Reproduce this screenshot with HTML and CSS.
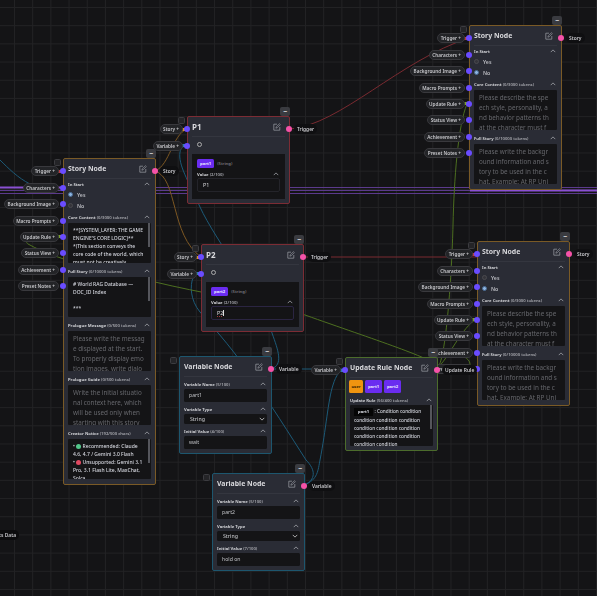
FILE: index.html
```html
<!DOCTYPE html>
<html>
<head>
    <title>Story Graph</title>
    <meta name="viewport" content="width=device-width, initial-scale=1">
    <link rel="stylesheet" href="styles.css">
</head>
<body>
<svg class="defs" width="0" height="0">
    <symbol id="chev" viewBox="0 0 8 5"><path d="M1 4 L4 1 L7 4" fill="none" stroke="currentColor" stroke-width="1"/></symbol>
    <symbol id="edit" viewBox="0 0 10 10"><path d="M5 1.5 H1 V9 H8.5 V5" fill="none" stroke="currentColor" stroke-width="0.8"/><path d="M3.6 6.5 L4 4.9 L8 0.9 L9.2 2 L5.2 6 Z" fill="none" stroke="currentColor" stroke-width="0.7"/></symbol>
</svg>

<div class="canvas">
    <svg class="wires" width="597" height="596" viewBox="0 0 597 596">
        <g fill="none" stroke="#5b3a8c" stroke-width="1">
            <path d="M0 187.5 H597"/>
            <path d="M0 190.5 H597"/>
            <path d="M0 193.5 H597"/>
        </g>
        <path class="wire-char" d="M0 187.5 H66"/>
        <path class="wire-char" d="M470 190.5 H597"/>
        <g class="wire-blue">
            <path d="M0 160 C8 168 18 178 30 184"/>
            <path d="M271 369 C284 365 278 350 272 333 C262 300 215 240 200 207 C188 180 178 165 180 152 C181 147 184 146 187 146"/>
            <path d="M304 485 C316 480 316 470 306 460 C290 435 270 403 250 375 C235 352 220 335 200 312 C190 300 190 285 193 278 C195 274 198 273 201 273"/>
            <path d="M271 369 H345"/>
            <path d="M304 485 C318 480 318 470 320 460 C326 430 328 400 333 385 C336 375 340 370 345 369"/>
        </g>
        <g class="wire-green">
            <path d="M437 368 C445 362 375 340 305 315 C250 300 200 293 155 282 C115 273 60 262 28 244 C20 238 50 237 63 237"/>
            <path d="M437 368 C446 364 452 270 453 225 C454 180 458 125 467 104 L469 104"/>
            <path d="M437 368 C448 360 462 326 477 319"/>
            <path d="M437 368 C460 366 470 372 470 364 C470 358 460 355 452 350"/>
        </g>
        <g class="wire-red">
            <path d="M290 129 C340 125 400 60 469 38"/>
            <path d="M304 257 H477"/>
        </g>
        <g class="wire-brown">
            <path d="M155 171 C170 165 172 135 187 129"/>
            <path d="M155 171 C178 178 170 235 201 257"/>
        </g>
    </svg>

    <!-- story node left -->
    <div class="node story node-a">
        <span class="collapse">−</span><span class="grip"></span>
        <div class="ports">
            <div class="port"><span class="pill">Trigger +</span><span class="dot tick-red"></span></div>
            <div class="port"><span class="pill">Characters +</span><span class="dot"></span></div>
            <div class="port"><span class="pill">Background Image +</span><span class="dot"></span></div>
            <div class="port"><span class="pill">Macro Prompts +</span><span class="dot"></span></div>
            <div class="port"><span class="pill">Update Rule +</span><span class="dot tick-green"></span></div>
            <div class="port"><span class="pill">Status View +</span><span class="dot"></span></div>
            <div class="port"><span class="pill">Achievement +</span><span class="dot"></span></div>
            <div class="port"><span class="pill">Preset Notes +</span><span class="dot"></span></div>
        </div>
        <div class="out"><span class="dot pink"></span><span class="tag">Story</span></div>
        <div class="head"><b>Story Node</b><svg class="edit"><use href="#edit"/></svg></div>
        <div class="label"><span>In Start</span><svg class="chev"><use href="#chev"/></svg></div>
        <div class="radios">
            <div class="radio"><span class="mark on"></span>Yes</div>
            <div class="radio"><span class="mark"></span>No</div>
        </div>
        <div class="field">
            <div class="label"><span>Core Content <i>(0/3000 tokens)</i></span><svg class="chev"><use href="#chev"/></svg></div>
            <div class="box scroll white">**[SYSTEM_LAYER: THE GAME<br>ENGINE'S CORE LOGIC]**<br>*(This section conveys the<br>core code of the world, which<br>must not be creatively</div>
        </div>
        <div class="field">
            <div class="label"><span>Full Story <i>(0/10000 tokens)</i></span><svg class="chev"><use href="#chev"/></svg></div>
            <div class="box scroll white"># World RAG Database —<br>DOC_ID Index<br><br>***</div>
        </div>
        <div class="field">
            <div class="label"><span>Prologue Message <i>(0/500 tokens)</i></span><svg class="chev"><use href="#chev"/></svg></div>
            <div class="box hint">Please write the messag<br>e displayed at the start.<br>To properly display emo<br>tion images, write dialo</div>
        </div>
        <div class="field">
            <div class="label"><span>Prologue Guide <i>(0/500 tokens)</i></span><svg class="chev"><use href="#chev"/></svg></div>
            <div class="box hint">Write the initial situatio<br>nal context here, which<br>will be used only when<br>starting with this story</div>
        </div>
        <div class="field">
            <div class="label"><span>Creator Notice <i>(192/500 chars)</i></span><svg class="chev"><use href="#chev"/></svg></div>
            <div class="box scroll white">• <span class="blob green"></span> Recommended: Claude<br>4.6, 4.7 / Gemini 3.0 Flash<br>• <span class="blob red"></span> Unsupported: Gemini 3.1<br>Pro, 3.1 Flash Lite, MaxChat,<br>Solca</div>
        </div>
    </div>

    <!-- story node top right -->
    <div class="node story node-b">
        <span class="collapse">−</span><span class="grip"></span>
        <div class="ports">
            <div class="port"><span class="pill">Trigger +</span><span class="dot tick-red"></span></div>
            <div class="port"><span class="pill">Characters +</span><span class="dot"></span></div>
            <div class="port"><span class="pill">Background Image +</span><span class="dot"></span></div>
            <div class="port"><span class="pill">Macro Prompts +</span><span class="dot"></span></div>
            <div class="port"><span class="pill">Update Rule +</span><span class="dot tick-green"></span></div>
            <div class="port"><span class="pill">Status View +</span><span class="dot"></span></div>
            <div class="port"><span class="pill">Achievement +</span><span class="dot"></span></div>
            <div class="port"><span class="pill">Preset Notes +</span><span class="dot"></span></div>
        </div>
        <div class="out"><span class="dot pink"></span><span class="tag">Story</span></div>
        <div class="head"><b>Story Node</b><svg class="edit"><use href="#edit"/></svg></div>
        <div class="label"><span>In Start</span><svg class="chev"><use href="#chev"/></svg></div>
        <div class="radios">
            <div class="radio"><span class="mark"></span>Yes</div>
            <div class="radio"><span class="mark on"></span>No</div>
        </div>
        <div class="field">
            <div class="label"><span>Core Content <i>(0/3000 tokens)</i></span><svg class="chev"><use href="#chev"/></svg></div>
            <div class="box hint">Please describe the spe<br>ech style, personality, a<br>nd behavior patterns th<br>at the character must f</div>
        </div>
        <div class="field">
            <div class="label"><span>Full Story <i>(0/10000 tokens)</i></span><svg class="chev"><use href="#chev"/></svg></div>
            <div class="box hint">Please write the backgr<br>ound information and s<br>tory to be used in the c<br>hat. Example: At RP Uni</div>
        </div>
    </div>

    <!-- story node middle right -->
    <div class="node story node-c">
        <span class="collapse">−</span><span class="grip"></span>
        <div class="ports">
            <div class="port"><span class="pill">Trigger +</span><span class="dot tick-red"></span></div>
            <div class="port"><span class="pill">Characters +</span><span class="dot"></span></div>
            <div class="port"><span class="pill">Background Image +</span><span class="dot"></span></div>
            <div class="port"><span class="pill">Macro Prompts +</span><span class="dot"></span></div>
            <div class="port"><span class="pill">Update Rule +</span><span class="dot tick-green"></span></div>
            <div class="port"><span class="pill">Status View +</span><span class="dot"></span></div>
            <div class="port"><span class="pill">Achievement +</span><span class="dot"></span></div>
            <div class="port"><span class="pill">Preset Notes +</span><span class="dot"></span></div>
        </div>
        <div class="out"><span class="dot pink"></span><span class="tag">Story</span></div>
        <div class="head"><b>Story Node</b><svg class="edit"><use href="#edit"/></svg></div>
        <div class="label"><span>In Start</span><svg class="chev"><use href="#chev"/></svg></div>
        <div class="radios">
            <div class="radio"><span class="mark"></span>Yes</div>
            <div class="radio"><span class="mark on"></span>No</div>
        </div>
        <div class="field">
            <div class="label"><span>Core Content <i>(0/3000 tokens)</i></span><svg class="chev"><use href="#chev"/></svg></div>
            <div class="box hint">Please describe the spe<br>ech style, personality, a<br>nd behavior patterns th<br>at the character must f</div>
        </div>
        <div class="field">
            <div class="label"><span>Full Story <i>(0/10000 tokens)</i></span><svg class="chev"><use href="#chev"/></svg></div>
            <div class="box hint">Please write the backgr<br>ound information and s<br>tory to be used in the c<br>hat. Example: At RP Uni</div>
        </div>
    </div>

    <!-- prompts -->
    <div class="node prompt node-p1">
        <span class="collapse">−</span><span class="grip"></span>
        <div class="ports">
            <div class="port"><span class="pill">Story +</span><span class="dot tick-orange"></span></div>
            <div class="port"><span class="pill">Variable +</span><span class="dot tick-blue"></span></div>
        </div>
        <div class="out"><span class="dot pink"></span><span class="tag">Trigger</span></div>
        <div class="head"><b>P1</b><svg class="edit"><use href="#edit"/></svg></div>
        <div class="ring-row"><span class="ring"></span></div>
        <div class="panel">
            <div class="chip-row"><span class="chip purple">part1</span><span class="chip-type">(String)</span></div>
            <div class="label"><span>Value <i>(2/100)</i></span><svg class="chev"><use href="#chev"/></svg></div>
            <div class="value">P1</div>
        </div>
    </div>

    <div class="node prompt node-p2">
        <span class="collapse">−</span><span class="grip"></span>
        <div class="ports">
            <div class="port"><span class="pill">Story +</span><span class="dot tick-orange"></span></div>
            <div class="port"><span class="pill">Variable +</span><span class="dot tick-blue"></span></div>
        </div>
        <div class="out"><span class="dot pink"></span><span class="tag">Trigger</span></div>
        <div class="head"><b>P2</b><svg class="edit"><use href="#edit"/></svg></div>
        <div class="ring-row"><span class="ring"></span></div>
        <div class="panel">
            <div class="chip-row"><span class="chip purple">part2</span><span class="chip-type">(String)</span></div>
            <div class="label"><span>Value <i>(2/100)</i></span><svg class="chev"><use href="#chev"/></svg></div>
            <div class="value focused"><u>P2</u><span class="caret"></span></div>
        </div>
    </div>

    <!-- variables -->
    <div class="node variable node-v1">
        <span class="collapse">−</span><span class="grip"></span>
        <div class="out"><span class="dot pink"></span><span class="tag">Variable</span></div>
        <div class="head"><b>Variable Node</b><svg class="edit"><use href="#edit"/></svg></div>
        <div class="label"><span>Variable Name <i>(5/100)</i></span><svg class="chev"><use href="#chev"/></svg></div>
        <div class="input">part1</div>
        <div class="label"><span>Variable Type</span><svg class="chev"><use href="#chev"/></svg></div>
        <div class="select"><span>String</span><svg class="chev flip"><use href="#chev"/></svg></div>
        <div class="label"><span>Initial Value <i>(4/100)</i></span><svg class="chev"><use href="#chev"/></svg></div>
        <div class="input">wait</div>
    </div>

    <div class="node variable node-v2">
        <span class="collapse">−</span><span class="grip"></span>
        <div class="out"><span class="dot pink"></span><span class="tag">Variable</span></div>
        <div class="head"><b>Variable Node</b><svg class="edit"><use href="#edit"/></svg></div>
        <div class="label"><span>Variable Name <i>(5/100)</i></span><svg class="chev"><use href="#chev"/></svg></div>
        <div class="input">part2</div>
        <div class="label"><span>Variable Type</span><svg class="chev"><use href="#chev"/></svg></div>
        <div class="select"><span>String</span><svg class="chev flip"><use href="#chev"/></svg></div>
        <div class="label"><span>Initial Value <i>(7/100)</i></span><svg class="chev"><use href="#chev"/></svg></div>
        <div class="input">hold on</div>
    </div>

    <!-- update rule -->
    <div class="node rule node-u">
        <span class="collapse">−</span><span class="grip"></span>
        <div class="ports">
            <div class="port"><span class="pill">Variable +</span><span class="dot tick-blue"></span></div>
        </div>
        <div class="out"><span class="dot pink"></span><span class="tag">Update Rule</span></div>
        <div class="head"><b>Update Rule Node</b><svg class="edit"><use href="#edit"/></svg></div>
        <div class="chips">
            <span class="chip orange">user</span>
            <span class="chip purple">part1</span>
            <span class="chip purple">part2</span>
        </div>
        <div class="label"><span>Update Rule <i>(56/400 tokens)</i></span><svg class="chev"><use href="#chev"/></svg></div>
        <div class="box scroll white"><span class="code">part1</span> : Condition condition<br>condition condition condition<br>condition condition condition<br>condition condition condition<br>condition condition</div>
    </div>

    <div class="stray">Scripts Data</div>
</div>
</body>
</html>
```

FILE: styles.css
```css
* {
    box-sizing: border-box;
}

html, body {
    margin: 0;
    height: 100%;
    overflow: hidden;
}

body {
    background-color: #141416;
    font-family: "Noto Sans", "Open Sans", sans-serif;
    color: #cfd0d4;
}

.defs {
    position: absolute;
}

.canvas {
    position: relative;
    width: 597px;
    height: 596px;
    overflow: hidden;
    background-color: #141416;
    background-image:
        linear-gradient(#222224 1px, transparent 1px),
        linear-gradient(90deg, #222224 1px, transparent 1px);
    background-size: 18.2px 18.2px;
    background-position: 14px 7px;
}

.wires {
    position: absolute;
    left: 0;
    top: 0;
}

.wire-char {
    fill: none;
    stroke: #8a50d2;
    stroke-width: 2;
}

.wire-blue path {
    fill: none;
    stroke: #1c5a78;
    stroke-width: 1;
}

.wire-green path {
    fill: none;
    stroke: #4d6f20;
    stroke-width: 1;
}

.wire-red path {
    fill: none;
    stroke: #7a2a30;
    stroke-width: 1;
}

.wire-brown path {
    fill: none;
    stroke: #7d5722;
    stroke-width: 1;
}

/* nodes */
.node {
    position: absolute;
    width: 93px;
    padding: 0 4px;
    background-color: #2a2c35;
    border: 1px solid #555;
    border-radius: 2px;
    isolation: isolate;
}

.story { border-color: #7a5a26; padding-bottom: 2px; }
.prompt { width: 103px; height: 88px; border-color: #7c2c34; }
.variable { border-color: #1d566e; padding-bottom: 4px; }
.rule { border-color: #4c6c2c; height: 94px; }

.node-a { left: 63px; top: 158px; }
.node-b { left: 469px; top: 25px; }
.node-c { left: 477px; top: 241px; }
.node-p1 { left: 187px; top: 116px; }
.node-p2 { left: 201px; top: 244px; }
.node-v1 { left: 179px; top: 356px; }
.node-v2 { left: 212px; top: 473px; }
.node-u { left: 345px; top: 357px; }

/* the graph is zoomed out in the original, so the small text is soft */
.box, .label span, .pill, .tag, .head b, .input, .select span, .radio, .value, .stray {
    filter: blur(0.2px);
}

.collapse {
    position: absolute;
    right: -1px;
    top: -10px;
    width: 10px;
    height: 9px;
    background-color: #3a3b40;
    border-radius: 2px;
    font-size: 7px;
    font-weight: 700;
    line-height: 9px;
    text-align: center;
    color: #ddd;
}

.grip {
    position: absolute;
    left: -10px;
    top: 0;
    width: 7px;
    height: 7px;
    background-color: #242427;
    border: 1px solid #3c3c40;
    border-radius: 1.5px;
}

.head {
    display: flex;
    align-items: center;
    justify-content: space-between;
    height: 20px;
    border-bottom: 1px solid #34363f;
}

.head b {
    font-size: 6.9px;
    font-weight: 700;
    color: #d8d8dc;
}

.prompt .head b {
    font-size: 8px;
}

.edit {
    width: 8px;
    height: 8px;
    margin-right: 4px;
    color: #a9abb2;
}

.label {
    display: flex;
    align-items: center;
    justify-content: space-between;
    height: 10px;
    font-size: 4.2px;
    font-weight: 700;
    color: #cfd0d4;
}

.label i {
    font-style: normal;
    font-weight: 600;
    color: #a7a8ae;
}

.chev {
    width: 6px;
    height: 4px;
    margin-right: 1px;
    color: #a9abb2;
}

.flip {
    transform: rotate(180deg);
    color: #ddd;
    margin-right: 0;
}

.radios {
    height: 22px;
    margin-bottom: 1px;
}

.radio {
    display: flex;
    align-items: center;
    gap: 4px;
    height: 11px;
    font-size: 5.2px;
    font-weight: 600;
    color: #b9bac0;
}

.mark {
    width: 5px;
    height: 5px;
    border-radius: 50%;
    background-color: #34343a;
    border: 1px solid #4a4a4f;
}

.mark.on {
    background-color: #8db4e0;
    border: 1.5px solid #4a6b92;
}

.field {
    margin-bottom: 3px;
}

.field .box {
    margin-top: 1px;
}

.box {
    position: relative;
    height: 40px;
    padding: 3px 5px 0;
    overflow: hidden;
    background-color: #141416;
    border-radius: 1px;
    white-space: nowrap;
}

.hint {
    font-size: 6.3px;
    line-height: 10px;
    color: #66676c;
}

.white {
    font-size: 5px;
    line-height: 8px;
    font-weight: 500;
    color: #d6d8e0;
    padding-right: 4px;
}

.scroll::after {
    content: "";
    position: absolute;
    right: 1px;
    top: 0;
    width: 2px;
    height: 24px;
    background-color: #55565c;
}

.blob {
    display: inline-block;
    width: 5px;
    height: 5px;
    border-radius: 50%;
    vertical-align: -0.5px;
}

.blob.green { background-color: #52c78a; }
.blob.red { background-color: #e04860; }

/* ports */
.ports {
    position: absolute;
    right: calc(100% - 2px);
    top: 4px;
}

.port {
    display: flex;
    align-items: center;
    justify-content: flex-end;
    gap: 1.5px;
    height: 16.45px;
}

.pill {
    height: 10px;
    padding: 0 2.5px;
    background-color: #232427;
    border: 1px solid #39393d;
    border-radius: 5px;
    font-size: 4.7px;
    font-weight: 600;
    line-height: 8px;
    white-space: nowrap;
    color: #c8c8cc;
}

.dot {
    position: relative;
    width: 6px;
    height: 6px;
    border-radius: 50%;
    background-color: #6a4cff;
    flex: none;
}

.dot.pink {
    background-color: #f552a8;
}

.dot::before {
    content: "";
    position: absolute;
    left: -2px;
    top: 1.5px;
    width: 3px;
    height: 3px;
    z-index: -1;
}

.tick-red::before { background-color: #b53a40; }
.tick-green::before { background-color: #7aa32a; }
.tick-orange::before { background-color: #d8912a; }
.tick-blue::before { background-color: #2d7fa8; }

.out {
    position: absolute;
    left: calc(100% - 3px);
    top: 7px;
    display: flex;
    align-items: center;
    gap: 2px;
}

.tag {
    height: 10px;
    padding: 0 3px;
    background-color: #0f0f11;
    border-radius: 5px;
    font-size: 4.9px;
    font-weight: 600;
    line-height: 10px;
    white-space: nowrap;
    color: #c8c8cc;
}

/* prompt body */
.ring-row {
    display: flex;
    align-items: center;
    height: 15px;
    margin-bottom: 2px;
    padding-left: 5px;
}

.ring {
    width: 5px;
    height: 5px;
    border: 1px solid #aaa;
    border-radius: 50%;
}

.panel {
    height: 45px;
    padding: 5px 5px 0;
    background-color: #141416;
}

.chip-row {
    display: flex;
    align-items: center;
    gap: 3px;
}

.chip {
    display: inline-block;
    height: 9px;
    padding: 0 3px;
    min-width: 17px;
    border-radius: 1.5px;
    font-size: 4.2px;
    font-weight: 700;
    line-height: 9px;
    text-align: center;
    color: #e8e4ff;
}

.purple { background-color: #6a2cf0; }
.orange { background-color: #f09410; color: #3a2500; }

.chip-type {
    font-size: 4.2px;
    font-weight: 600;
    color: #77777d;
}

.panel .label {
    height: 8px;
    margin-top: 2px;
}

.value {
    height: 14px;
    margin-top: 0;
    padding-left: 5px;
    background-color: #141416;
    border: 1px solid #24242a;
    border-radius: 2px;
    font-size: 5.4px;
    line-height: 12px;
    color: #d8d8dc;
}

.focused {
    border-color: #2b2542;
}

.focused u {
    text-decoration: underline dotted #a03838;
}

.caret {
    display: inline-block;
    width: 0.5px;
    height: 6px;
    background-color: #ddd;
    vertical-align: -1px;
}

/* variable body */
.variable .label {
    margin-top: 2px;
}

.input {
    height: 13px;
    margin-bottom: 2px;
    padding-left: 5px;
    background-color: #141416;
    border-radius: 1.5px;
    font-size: 5.2px;
    line-height: 13px;
    color: #bfc0c4;
}

.input:last-child {
    margin-bottom: 0;
}

.select {
    display: flex;
    align-items: center;
    justify-content: space-between;
    height: 10px;
    margin-bottom: 2px;
    padding: 0 2px 0 6px;
    background-color: #141416;
    border-radius: 1.5px;
    font-size: 5.2px;
    font-weight: 500;
    color: #bfc0c4;
}

/* rule body */
.chips {
    display: flex;
    gap: 2px;
    margin-top: 2px;
    margin-left: -1px;
}

.chips .chip {
    height: 13px;
    line-height: 13px;
    min-width: 14px;
    padding: 0;
}

.chips .purple {
    width: 17px;
}

.rule .label {
    margin-top: 2px;
}

.rule .box {
    height: 41px;
    padding: 2px 4px 0;
    font-size: 4.7px;
}

.code {
    display: inline-block;
    padding: 0 4px;
    background-color: #050505;
    font-size: 4.2px;
    font-weight: 700;
}

.stray {
    position: absolute;
    right: 578px;
    top: 530px;
    height: 10px;
    padding: 0 3px;
    background-color: #0c0c0e;
    border-radius: 5px;
    font-size: 4.9px;
    font-weight: 600;
    line-height: 10px;
    white-space: nowrap;
    color: #c8c8cc;
}
```
